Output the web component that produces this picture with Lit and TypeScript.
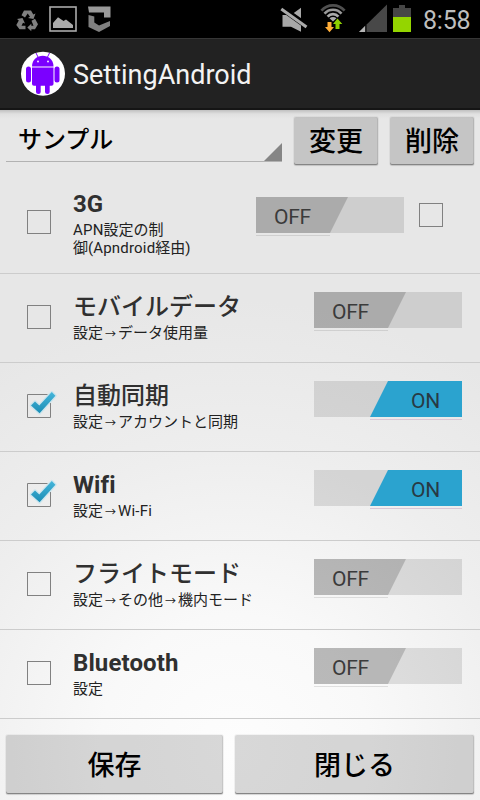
import { LitElement, html, css, svg, nothing } from "lit";
import { customElement, property } from "lit/decorators.js";
import { classMap } from "lit/directives/class-map.js";

interface Setting {
  title: string;
  lines: string[];
  checked: boolean;
  on: boolean;
  extra?: boolean;
  latin?: boolean;
}

const SETTINGS: Setting[] = [
  { title: "3G", lines: ["APN設定の制", "御(Apndroid経由)"], checked: false, on: false, extra: true, latin: true },
  { title: "モバイルデータ", lines: ["設定→データ使用量"], checked: false, on: false },
  { title: "自動同期", lines: ["設定→アカウントと同期"], checked: true, on: true },
  { title: "Wifi", lines: ["設定→Wi-Fi"], checked: true, on: true, latin: true },
  { title: "フライトモード", lines: ["設定→その他→機内モード"], checked: false, on: false },
  { title: "Bluetooth", lines: ["設定"], checked: false, on: false, latin: true },
];

const TICK = "M4 11.500L8 7.500L12.300 11.500L24.800 -1.900L28.400 1.700L12.600 19.300Z";

@customElement("holo-checkbox")
export class HoloCheckbox extends LitElement {
  @property({ type: Boolean }) checked = false;

  static styles = css`
    :host { display: block; width: 30px; height: 26px; }
    svg { display: block; overflow: visible; }
  `;

  render() {
    return html`<svg width="30" height="26" viewBox="0 0 30 26">
      <defs>
        <linearGradient id="tick" x1="0" y1="0" x2="0" y2="1">
          <stop offset="0" stop-color="#45b5da" />
          <stop offset="1" stop-color="#1a8db5" />
        </linearGradient>
      </defs>
      ${this.checked
        ? svg`<path d="M20.500 .5H.5V23.500H23.500V9" fill="none" stroke="#818181" />
            <path d=${TICK} fill="none" stroke="#a9dff2" stroke-opacity=".5" stroke-width="2.500" stroke-linejoin="round" />
            <path d=${TICK} fill="url(#tick)" />`
        : svg`<rect x=".5" y=".5" width="23" height="23" fill="none" stroke="#818181" />`}
    </svg>`;
  }
}

@customElement("holo-switch")
export class HoloSwitch extends LitElement {
  @property({ type: Boolean }) on = false;

  static styles = css`
    :host { display: block; width: 148px; height: 39px; }
    .track { width: 148px; height: 36px; background: rgba(0, 0, 0, .105); }
    .thumb {
      display: flex; align-items: center; box-sizing: border-box;
      width: 92px; height: 36px; padding: 4px 0 0 18px;
      font: 21px/30px Roboto, sans-serif; letter-spacing: -0.3px; color: #3b3b3b;
      background: rgba(0, 0, 0, .17);
      clip-path: polygon(0 0, 100% 0, 74px 100%, 0 100%);
    }
    .on .thumb {
      margin-left: 56px; padding-left: 41px; color: #283a44; background: #2ba3cf;
      clip-path: polygon(18px 0, 100% 0, 100% 100%, 0 100%);
    }
    .edge { height: 1px; width: 74px; margin-top: 2px; background: rgba(0, 0, 0, .1); }
    .on + .edge { width: 92px; margin-left: 56px; background: #d9c7d7; }
  `;

  render() {
    return html`<div class=${classMap({ track: true, on: this.on })}>
        <div class="thumb">${this.on ? "ON" : "OFF"}</div>
      </div>
      <div class="edge"></div>`;
  }
}

@customElement("status-bar")
export class StatusBar extends LitElement {
  static styles = css`
    :host {
      display: flex; align-items: flex-start; justify-content: space-between;
      height: 38px; background: #000; box-sizing: border-box;
    }
    svg { display: block; }
    .right { display: flex; }
    .clock {
      width: 57px; font: 25px/38px Roboto, sans-serif; letter-spacing: -0.2px;
      color: #bebebe; padding-top: 2px; white-space: nowrap;
    }
  `;

  render() {
    return html`
      <svg width="120" height="38" viewBox="0 0 120 38">
        <g fill="#808080">
          <path d="M24 10.500H31L33.300 14.500L35.500 13.500L33.500 19L28 18L30 16.700L27.700 13.500L25 17.500L21.500 15.300Z" />
          <path d="M17 19L22.500 18L25 23.500L23 22.700L21.500 25.700H25.500V29.300H19.500L16.300 25L18.800 20.500Z" />
          <path d="M31.500 20.700L35 18.700L38 24.300L35 29.300H31.300V31.300L27.300 27.500L31.300 23.700V25.700H33.500Z" />
        </g>
        <rect x="50" y="7" width="26" height="24" fill="none" stroke="#aaa" stroke-width="1.600" />
        <path d="M53 28V23L58 17.300L63.500 21L66 19.500L73 25V28Z" fill="#aaa" />
        <path d="M88 6.500H110.500V17.500H104V12.500H89Z" fill="#999" />
        <path d="M88.500 15L94.300 16.500V22.500L99 25.500L110 21V26L99 32L88.500 27Z" fill="#808080" />
      </svg>
      <div class="right">
        <svg width="143" height="38" viewBox="280 0 143 38">
          <path d="M282.500 15H291L301 7.700V31.800L291 26.700H282.500Z" fill="#a8a8a8" />
          <path d="M281.500 8L307.500 26.500" stroke="#000" stroke-width="6" />
          <path d="M281.300 9L306.500 27" stroke="#aaa" stroke-width="3" />
          <g fill="none" stroke-width="2.700">
            <path d="M321.400 10.600A15.500 15.500 0 0 1 344.600 10.600" stroke="#505050" />
            <path d="M324.500 13.600A11.300 11.300 0 0 1 341.500 13.600" stroke="#999" />
            <path d="M327.600 16.600A7.300 7.300 0 0 1 338.400 16.600" stroke="#aaa" />
          </g>
          <path d="M329.500 18.300Q333 15.500 336.500 18.300L333 21.500Z" fill="#aaa" />
          <path d="M327.500 22H331.500V27H334L329.500 32.300L325 27H327.500Z" fill="#ffad38" />
          <path d="M337.500 18.500L342.300 24H339.500V29H335.500V24H333Z" fill="#8fd000" />
          <path d="M359 32L387 4.500V32Z" fill="#484848" />
          <path d="M359 32L365 26V32Z" fill="#b5b5b5" />
          <path d="M366 25V32" stroke="#000" />
          <path d="M399 5H405V8H411V17H393V8H399Z" fill="#464646" />
          <rect x="393" y="17" width="18" height="15" fill="#94d500" />
        </svg>
        <div class="clock">8:58</div>
      </div>`;
  }
}

@customElement("setting-row")
export class SettingRow extends LitElement {
  @property({ attribute: false }) setting!: Setting;

  static styles = css`
    :host { display: block; }
    .row {
      display: flex; box-sizing: border-box; height: 89px; padding-left: 27px;
      border-bottom: 1px solid #ccc;
    }
    .check { margin-top: 31px; }
    .text { flex: 1; margin-left: 16px; padding-top: 17px; color: #303030; }
    .title { font: 500 24px/32px Roboto, "Noto Sans CJK JP", sans-serif; height: 33px; white-space: nowrap; }
    .latin .title { font-weight: 700; letter-spacing: 0.1px; }
    .sub {
      font: 15px/18px Roboto, "Noto Sans CJK JP", sans-serif; height: 18px; color: #222; white-space: nowrap;
    }
    .wide { letter-spacing: 0.2px; }
    .arrow { display: inline-block; width: 15px; text-align: center; font-size: 11px; line-height: 14px; }
    .switch { margin: 18px 18px 0 0; }
    .tall { height: 104px; }
    .tall .check { margin-top: 40px; }
    .tall .text { padding-top: 18px; }
    .tall .switch { margin: 27px 15px 0 0; }
    .tall .extra { margin: 33px 31px 0 0; }
  `;

  private line(text: string) {
    return text
      .split(/(→|[A-Za-z-]+)/)
      .map((part) =>
        part === "→"
          ? html`<span class="arrow">→</span>`
          : /^[A-Za-z]/.test(part)
            ? html`<span class="wide">${part}</span>`
            : part
      );
  }

  render() {
    const s = this.setting;
    return html`<div class=${classMap({ row: true, tall: !!s.extra, latin: !!s.latin })}>
      <holo-checkbox class="check" .checked=${s.checked}></holo-checkbox>
      <div class="text">
        <div class="title">${s.title}</div>
        ${s.lines.map((text) => html`<div class="sub">${this.line(text)}</div>`)}
      </div>
      <holo-switch class="switch" .on=${s.on}></holo-switch>
      ${s.extra ? html`<holo-checkbox class="extra"></holo-checkbox>` : nothing}
    </div>`;
  }
}

@customElement("app-root")
export class AppRoot extends LitElement {
  static styles = css`
    :host {
      display: flex; flex-direction: column; width: 480px; height: 800px; overflow: hidden;
      font-family: Roboto, "Noto Sans CJK JP", sans-serif;
    }
    .bar {
      display: flex; align-items: center; box-sizing: border-box; height: 72px;
      padding: 0 0 1px 20px; background: #222; border-top: 1px solid #363636;
      border-bottom: 2px solid #151515;
    }
    .bar svg { display: block; }
    .name { margin-left: 8px; padding-top: 4px; font-size: 27px; line-height: 36px; letter-spacing: 0; color: #f3f3f3; }
    .content {
      flex: 1; display: flex; flex-direction: column;
      background:
        linear-gradient(rgba(0, 0, 0, .17), rgba(0, 0, 0, .03) 4px, transparent 9px),
        radial-gradient(circle 450px at 235px 640px, #fdfdfd 0, #f9f9f9 30%, #eee 66%, #e7e7e7 100%);
    }
    .top { display: flex; gap: 12px; height: 60px; padding: 6px 6px 0; box-sizing: border-box; }
    .spinner {
      flex: 1; display: flex; justify-content: space-between; align-items: flex-end;
      box-sizing: border-box; height: 46px; border-bottom: 1px solid #b2b2b2;
      padding-left: 12px; font-size: 24px; color: #000; font-weight: 500;
    }
    .label { height: 45px; line-height: 49px; }
    .corner { width: 18px; height: 18px; background: #858585; clip-path: polygon(100% 0, 100% 100%, 0 100%); }
    button {
      display: flex; align-items: center; justify-content: center; box-sizing: border-box;
      margin: 0; padding: 2px 0 0; border: 0; border-radius: 2px;
      background: rgba(0, 0, 0, .145);
      box-shadow: 0 0 0 1px rgba(0, 0, 0, .04), inset 0 -1px 0 #858585, inset -1px 0 0 rgba(0, 0, 0, .08), 0 1px 1px rgba(0, 0, 0, .12);
      font: 500 27px/40px Roboto, "Noto Sans CJK JP", sans-serif; color: #000;
    }
    .top button { width: 84px; height: 48px; margin-top: 1px; }
    .bottom { display: flex; gap: 12px; padding: 16px 6px 0; }
    .bottom button { height: 59px; }
    .save { width: 217px; }
    .close { flex: 1; }
  `;

  render() {
    return html`
      <status-bar></status-bar>
      <header class="bar">
        <svg width="45" height="46" viewBox="0 0 45 46">
          <circle cx="23" cy="23.700" r="22" fill="#fff" />
          <g fill="#7b00ff">
            <path d="M12 16.500C12 2.200 33.500 2.200 33.500 16.500Z" />
            <path d="M12 17.500H33.500V34Q33.500 35.700 31.500 35.700H29.700V42Q29.700 44 27.400 44T25 42V35.700H20.700V42Q20.700 44 18.400 44T16 42V35.700H14Q12 35.700 12 34Z" />
            <rect x="6" y="16.500" width="5" height="16" rx="2.500" />
            <rect x="34.500" y="16.500" width="5" height="16" rx="2.500" />
          </g>
          <path d="M16 3L18 7M29.500 3L27.500 7" stroke="#7b00ff" stroke-width="1" />
          <circle cx="18" cy="11.500" r=".9" fill="#fff" />
          <circle cx="28" cy="11.500" r=".9" fill="#fff" />
        </svg>
        <div class="name">SettingAndroid</div>
      </header>
      <main class="content">
        <div class="top">
          <div class="spinner"><span class="label">サンプル</span><span class="corner"></span></div>
          <button>変更</button>
          <button>削除</button>
        </div>
        ${SETTINGS.map((s) => html`<setting-row .setting=${s}></setting-row>`)}
        <div class="bottom">
          <button class="save">保存</button>
          <button class="close">閉じる</button>
        </div>
      </main>`;
  }
}
